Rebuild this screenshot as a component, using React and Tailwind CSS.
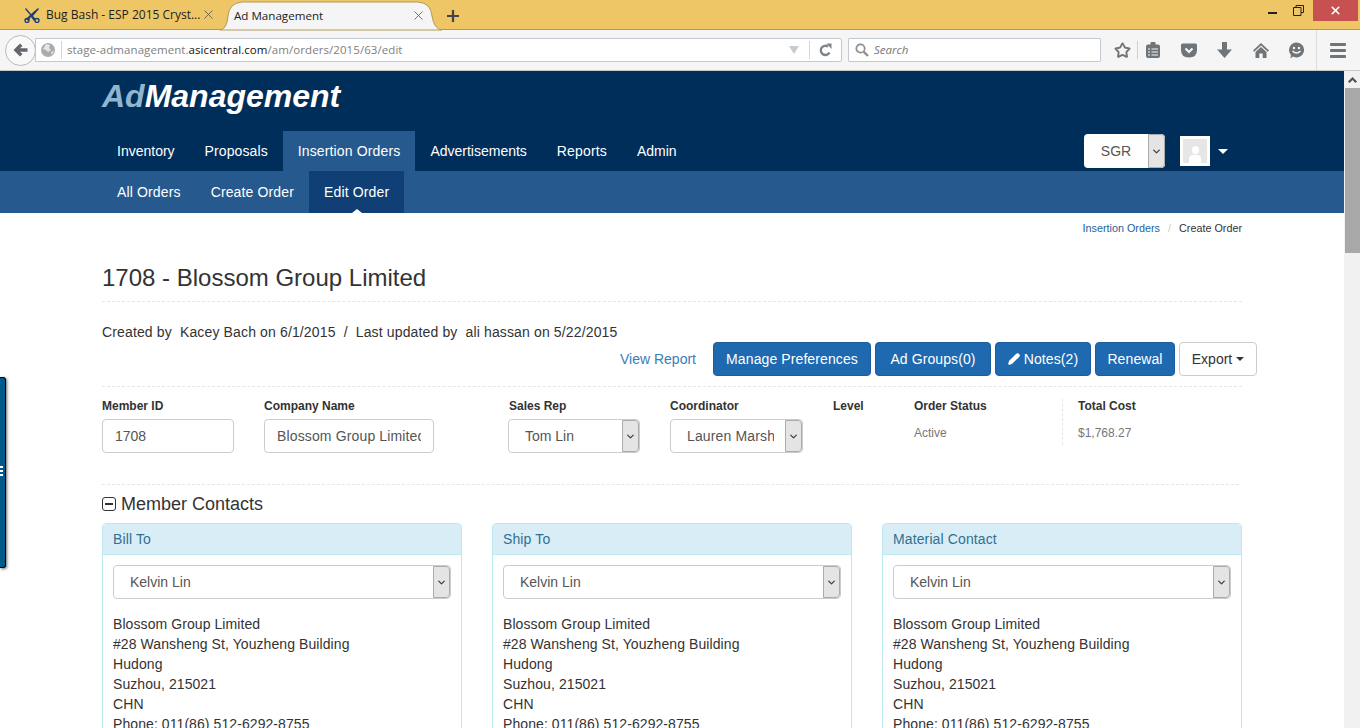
import { ChevronDown, Pencil, Star, X } from "lucide-react";

const font = "font-['Liberation_Sans',Arial,sans-serif]";

function Favicon() {
  return (
    <svg width="16" height="16" viewBox="0 0 16 16" className="shrink-0">
      <path d="M2 1 L7 7 L14 1 L15 2 L9 9 L12 12 L10 14 L7 10 L4 14 L2 12 L6 8 L1 2 Z" fill="#1d3f77" />
      <circle cx="3" cy="13.5" r="2" fill="none" stroke="#1d3f77" strokeWidth="1.4" />
      <circle cx="13" cy="13.5" r="2" fill="none" stroke="#1d3f77" strokeWidth="1.4" />
    </svg>
  );
}

function Globe() {
  return (
    <svg width="14" height="14" viewBox="0 0 14 14" className="shrink-0">
      <circle cx="7" cy="7" r="7" fill="#a9acaf" />
      <path d="M5 1 L9 2 L8 5 L10 7 L7 9 L5 7 L2 6 Z M10 9 L13 8 L11 12 Z" fill="#e4e5e6" />
    </svg>
  );
}

function BackArrow() {
  return (
    <svg width="15" height="14" viewBox="0 0 15 14">
      <path d="M7 0.5 L9.5 3 L7 5.3 H14.5 V8.7 H7 L9.5 11 L7 13.5 L0.5 7 Z" fill="#63676b" />
    </svg>
  );
}

function Reload() {
  return (
    <svg width="13" height="14" viewBox="0 0 13 14">
      <path d="M10.5 9.5 A4.6 4.6 0 1 1 9 3.6" fill="none" stroke="#7d8489" strokeWidth="2.4" />
      <path d="M7.5 0.5 H12.5 V6 Z" fill="#7d8489" />
    </svg>
  );
}

function Magnifier() {
  return (
    <svg width="14" height="14" viewBox="0 0 14 14" className="shrink-0">
      <circle cx="5.5" cy="5.5" r="4.2" fill="none" stroke="#8f8f8f" strokeWidth="1.7" />
      <path d="M8.8 8.8 L13 13" stroke="#8f8f8f" strokeWidth="2.4" />
    </svg>
  );
}

function Reader() {
  return (
    <svg width="14" height="16" viewBox="0 0 14 16">
      <rect x="0" y="2.5" width="14" height="13.5" rx="2" fill="#6f7479" />
      <rect x="4.5" y="0" width="5" height="3.5" rx="1" fill="#6f7479" />
      <path d="M2 7h2M2 10h2M2 13h2M5.5 7h6.5M5.5 10h6.5M5.5 13h6.5" stroke="#f5f5f5" strokeWidth="1.2" />
    </svg>
  );
}

function Pocket() {
  return (
    <svg width="16" height="15" viewBox="0 0 16 15">
      <path d="M1.5 0.5 H14.5 Q16 0.5 16 2 V7 Q16 14.5 8 14.5 Q0 14.5 0 7 V2 Q0 0.5 1.5 0.5 Z" fill="#6f7479" />
      <path d="M4.5 5.5 L8 9 L11.5 5.5" fill="none" stroke="#f5f5f5" strokeWidth="2.2" />
    </svg>
  );
}

function DownArrow() {
  return (
    <svg width="15" height="16" viewBox="0 0 15 16">
      <path d="M5 0 H10 V7.5 H15 L7.5 16 L0 7.5 H5 Z" fill="#6f7479" />
    </svg>
  );
}

function HomeIcon() {
  return (
    <svg width="16" height="15" viewBox="0 0 16 15">
      <path d="M8 0 L16 7.5 L14.8 8.8 L8 2.6 L1.2 8.8 L0 7.5 Z" fill="#6f7479" />
      <path d="M8 4 L13.5 9 V15 H9.7 V10.5 H6.3 V15 H2.5 V9 Z" fill="#6f7479" />
    </svg>
  );
}

function Smile() {
  return (
    <svg width="17" height="17" viewBox="0 0 17 17">
      <path d="M8.5 0.5 A7.5 7.5 0 1 1 5 14.6 L2.5 16.5 L3 13 A7.5 7.5 0 0 1 8.5 0.5 Z" fill="#6f7479" />
      <circle cx="6" cy="6" r="1.2" fill="#f5f5f5" />
      <circle cx="11" cy="6" r="1.2" fill="#f5f5f5" />
      <path d="M4.5 9 Q8.5 13 12.5 9" fill="none" stroke="#f5f5f5" strokeWidth="1.4" />
    </svg>
  );
}

function SelectArrow() {
  return (
    <div className="w-[17px] shrink-0 self-stretch flex items-center justify-center bg-[#e4e4e4] border border-[#ababab] rounded-r-[4px]">
      <ChevronDown size={11} strokeWidth={3} className="text-[#444]" />
    </div>
  );
}

function FakeSelect({ value, className = "", textClass = "" }) {
  return (
    <div className={`h-[34px] flex items-center bg-white border border-[#ccc] rounded-[4px] overflow-hidden ${className}`}>
      <span className={`flex-1 ml-[16px] text-[14px] text-[#555] whitespace-nowrap overflow-hidden ${textClass}`}>{value}</span>
      <SelectArrow />
    </div>
  );
}

function Contact({ title }) {
  return (
    <div className="w-[360px] h-[300px] border border-[#bce8f1] rounded-[4px] overflow-hidden">
      <div className="h-[31px] bg-[#d9edf7] border-b border-[#bce8f1] pl-[10px] flex items-center text-[14px] tracking-[0.12px] text-[#31708f]">{title}</div>
      <div className="pl-[10px] pr-[11px] pt-[10px] text-[14px] leading-[20px] tracking-[0.08px] text-[#333]">
        <FakeSelect value="Kelvin Lin" className="w-[338px] tracking-normal" />
        <div className="mt-[15px]">
          <div>Blossom Group Limited</div>
          <div>#28 Wansheng St, Youzheng Building</div>
          <div>Hudong</div>
          <div>Suzhou, 215021</div>
          <div>CHN</div>
          <div>Phone: 011(86) 512-6292-8755</div>
        </div>
      </div>
    </div>
  );
}

function Field({ label, className = "", children }) {
  return (
    <div className={`shrink-0 ${className}`}>
      <div className="h-[13px] mb-[7px] flex items-center text-[12px] font-bold text-[#333]">{label}</div>
      {children}
    </div>
  );
}

function BlueBtn({ children, className = "" }) {
  return (
    <div className={`h-[34px] flex items-center justify-center bg-[#1f69b0] border border-[#1a5e9f] rounded-[4px] text-[14px] tracking-[0.1px] text-white ${className}`}>
      {children}
    </div>
  );
}

export default function App() {
  const nav = [
    { label: "Inventory", className: "" },
    { label: "Proposals", className: "tracking-[0.1px]" },
    { label: "Insertion Orders", className: "bg-[#265a8f] tracking-[0.14px]" },
    { label: "Advertisements", className: "" },
    { label: "Reports", className: "tracking-[0.14px]" },
    { label: "Admin", className: "" },
  ];

  return (
    <div className={`${font} w-[1360px] h-[728px] overflow-hidden flex flex-col bg-white`}>
      {/* title bar */}
      <div className="h-[30px] shrink-0 relative flex bg-[#efc666] border-b border-[#b09a5a]">
        <div className="w-[220px] shrink-0 flex items-center pl-[24px] text-[12px] text-[#222] font-['Open_Sans',sans-serif]">
          <Favicon />
          <span className="ml-[6px] w-[146px] whitespace-nowrap">Bug Bash - ESP 2015 Cryst...</span>
          <X size={15} strokeWidth={1.3} className="ml-[9px] text-[#555]" />
        </div>
        <div className="relative w-[222px] h-[29px] mt-[1px] shrink-0 flex items-center pl-[14px] pr-[16px] text-[11.6px] text-[#222] font-['Open_Sans',sans-serif]">
          <svg width="222" height="30" viewBox="0 0 222 30" className="absolute left-0 top-0">
            <path d="M0 29 Q7 28 8 15 Q9 2 22 1 H198 Q211 2 212 15 Q214 28 222 29 Z" fill="#f5f5f5" stroke="#b09a5a" />
          </svg>
          <span className="relative flex-1">Ad Management</span>
          <X size={15} strokeWidth={1.3} className="relative text-[#555]" />
        </div>
        <svg width="12" height="12" viewBox="0 0 12 12" className="ml-[5px] mt-[10px]">
          <path d="M6 0 V12 M0 6 H12" stroke="#444" strokeWidth="2.2" />
        </svg>
        <div className="ml-auto flex items-start pr-[2px]">
          <div className="mt-[12px] w-[9px] h-[2px] bg-[#222]" />
          <svg width="11" height="11" viewBox="0 0 11 11" className="ml-[16px] mt-[5px]">
            <path d="M3 2.5 V0.5 H10.5 V7.5 H8 M0.5 2.5 H8 V10.5 H0.5 Z" fill="none" stroke="#222" />
          </svg>
          <div className="ml-[9px] w-[45px] h-[21px] bg-[#c75050] flex items-center justify-center">
            <X size={13} strokeWidth={3} className="text-white" />
          </div>
        </div>
      </div>

      {/* toolbar */}
      <div className="h-[41px] shrink-0 flex items-center bg-[#f5f5f5] border-b border-[#c8c8c8] pl-[5px] font-['Open_Sans',sans-serif]">
        <div className="relative z-10 w-[31px] h-[31px] rounded-full bg-[#f9f9f9] border border-[#b9b9b9] flex items-center justify-center">
          <BackArrow />
        </div>
        <div className="w-[807px] -ml-[1px] h-[24px] flex items-center bg-white border border-[#c2c9d0] rounded-r-[2px] pl-[5px]">
          <Globe />
          <div className="w-px h-[18px] bg-[#d5d5d5] ml-[6px]" />
          <span className="ml-[5px] flex-1 text-[11.5px] tracking-[0.07px] text-[#808080] whitespace-nowrap">
            stage-admanagement.<span className="text-[#111]">asicentral.com</span>/am/orders/2015/63/edit
          </span>
          <svg width="10" height="8" viewBox="0 0 10 8"><path d="M0 0 H10 L5 8 Z" fill="#c8ccd0" /></svg>
          <div className="w-px h-[18px] bg-[#d5d5d5] ml-[10px]" />
          <div className="mx-[9px] flex"><Reload /></div>
        </div>
        <div className="ml-[6px] w-[253px] h-[24px] flex items-center bg-white border border-[#c2c9d0] rounded-[1px] pl-[6px] text-[11.5px] italic text-[#777]">
          <Magnifier />
          <span className="ml-[5px]">Search</span>
        </div>
        <div className="flex items-center">
          <Star size={17} strokeWidth={2.6} className="ml-[13px] text-[#6f7479]" />
          <div className="w-px h-[18px] bg-[#d0d0d0] ml-[6px]" />
          <div className="ml-[8px] flex"><Reader /></div>
          <div className="ml-[21px] flex"><Pocket /></div>
          <div className="ml-[20px] flex"><DownArrow /></div>
          <div className="ml-[21px] flex"><HomeIcon /></div>
          <div className="ml-[19px] flex"><Smile /></div>
          <div className="w-px h-[40px] bg-[#dcdcdc] ml-[11px]" />
          <div className="ml-[13px] flex flex-col gap-[3px]">
            <div className="w-[16px] h-[3px] bg-[#6f7479] rounded-[1px]" />
            <div className="w-[16px] h-[3px] bg-[#6f7479] rounded-[1px]" />
            <div className="w-[16px] h-[3px] bg-[#6f7479] rounded-[1px]" />
          </div>
        </div>
      </div>

      {/* page */}
      <div className="relative flex-1 flex min-h-0">
        <div className="absolute left-0 top-[306px] w-[6px] h-[191px] bg-[#005a8c] border-r border-y border-black rounded-r-[3px] shadow-[1px_1px_3px_rgba(0,0,0,0.6)]">
          <div className="absolute left-0 top-[88px] flex flex-col gap-[2px]">
            <div className="w-[3px] h-[2px] bg-white" />
            <div className="w-[3px] h-[2px] bg-white" />
            <div className="w-[3px] h-[2px] bg-white" />
          </div>
        </div>

        <div className="w-[1344px] shrink-0 overflow-hidden">
          <header className="bg-[#002e5b]">
            <div className="w-[1140px] ml-[102px] h-[60px] pt-[6px]">
              <div className="text-[32px] leading-[38px] font-bold italic text-white">
                <span className="text-[#92b5cf]">Ad</span>Management
              </div>
            </div>
            <div className="w-[1140px] ml-[102px] h-[40px] flex items-stretch text-[14px]">
              {nav.map((item) => (
                <div key={item.label} className={`px-[15px] flex items-center text-white ${item.className}`}>
                  {item.label}
                </div>
              ))}
              <div className="ml-auto flex items-center">
                <div className="w-[81px] h-[34px] flex items-center bg-white rounded-[4px] overflow-hidden">
                  <span className="flex-1 text-center text-[14px] text-[#555]">SGR</span>
                  <SelectArrow />
                </div>
                <div className="ml-[15px] w-[30px] h-[30px] bg-white p-[3px]">
                  <div className="relative w-full h-full bg-[#e6e6e6] overflow-hidden">
                    <div className="absolute left-[9px] top-[7px] w-[7px] h-[8px] rounded-full bg-white" />
                    <div className="absolute left-[6px] top-[16px] w-[12px] h-[8px] rounded-t-[4px] bg-white" />
                  </div>
                </div>
                <div className="ml-[8px] mr-[14px] w-0 h-0 border-x-[5px] border-x-transparent border-t-[5px] border-t-white" />
              </div>
            </div>
          </header>
          <div className="h-[42px] bg-[#265a8f]">
            <div className="ml-[102px] h-full flex items-stretch text-[14px] tracking-[0.14px] text-white">
              <div className="px-[15px] flex items-center">All Orders</div>
              <div className="px-[15px] flex items-center">Create Order</div>
              <div className="relative px-[15px] flex items-center bg-[#0f3f75]">
                Edit Order
                <div className="absolute left-1/2 -translate-x-1/2 bottom-0 w-0 h-0 border-x-[5px] border-x-transparent border-b-[4px] border-b-white" />
              </div>
            </div>
          </div>

          <main className="w-[1140px] ml-[102px]">
            <div className="h-[30px] flex items-center justify-end text-[10.8px] text-[#333]">
              <span className="text-[#1f5f9c]">Insertion Orders</span>
              <span className="mx-[8px] text-[#ccc]">/</span>
              <span>Create Order</span>
            </div>
            <h1 className="mt-[20px] text-[24px] leading-[30px] text-[#333]">1708 - Blossom Group Limited</h1>
            <div className="mt-[8px] border-t border-dashed border-[#e6e6e6]" />
            <div className="mt-[22px] text-[14px] leading-[17px] tracking-[0.14px] text-[#333] whitespace-pre">Created by  Kacey Bach on 6/1/2015  /  Last updated by  ali hassan on 5/22/2015</div>

            <div className="mt-[1px] w-[1155px] flex items-center justify-end gap-[4px]">
              <span className="mr-[13px] text-[14px] text-[#3b7cba]">View Report</span>
              <BlueBtn className="w-[158px]">Manage Preferences</BlueBtn>
              <BlueBtn className="w-[116px]">Ad Groups(0)</BlueBtn>
              <BlueBtn className="w-[96px]">
                <Pencil size={12} strokeWidth={3} className="mr-[4px]" fill="currentColor" />Notes(2)
              </BlueBtn>
              <BlueBtn className="w-[80px]">Renewal</BlueBtn>
              <div className="w-[78px] h-[34px] flex items-center justify-center bg-white border border-[#ccc] rounded-[4px] text-[14px] text-[#333]">
                Export
                <div className="ml-[4px] w-0 h-0 border-x-[4px] border-x-transparent border-t-[4px] border-t-[#333]" />
              </div>
            </div>

            <div className="mt-[10px] border-t border-dashed border-[#e6e6e6]" />

            <div className="mt-[12px] flex items-start">
              <Field label="Member ID" className="w-[162px]">
                <div className="w-[132px] h-[34px] pl-[12px] flex items-center border border-[#ccc] rounded-[4px] text-[14px] text-[#555]">1708</div>
              </Field>
              <Field label="Company Name" className="w-[245px]">
                <div className="w-[170px] h-[34px] px-[12px] flex items-center border border-[#ccc] rounded-[4px] text-[14px] tracking-[0.14px] text-[#555] whitespace-nowrap overflow-hidden">
                  <span className="overflow-hidden">Blossom Group Limited</span>
                </div>
              </Field>
              <Field label="Sales Rep" className="w-[161px]">
                <FakeSelect value="Tom Lin" className="w-[132px] -ml-[1px]" />
              </Field>
              <Field label="Coordinator" className="w-[163px]">
                <FakeSelect value="Lauren Marsh" className="w-[133px] tracking-[0.14px]" textClass="mr-[11px]" />
              </Field>
              <Field label="Level" className="w-[81px]" />
              <Field label="Order Status" className="w-[148px]">
                <div className="text-[12px] leading-[14px] mt-[14px] text-[#777]">Active</div>
              </Field>
              <div className="shrink-0 h-[46px] border-l border-dashed border-[#e6e6e6] pl-[15px]">
                <div className="h-[13px] mb-[7px] flex items-center text-[12px] font-bold text-[#333]">Total Cost</div>
                <div className="text-[12px] leading-[14px] mt-[14px] text-[#777]">$1,768.27</div>
              </div>
            </div>

            <div className="mt-[31px] w-[1137px] border-t border-dashed border-[#e6e6e6]" />

            <div className="mt-[8px] h-[22px] flex items-center text-[18px] text-[#333]">
              <div className="w-[14px] h-[14px] border-[1.5px] border-[#333] rounded-[3px] flex items-center justify-center">
                <div className="w-[8px] h-[1.5px] bg-[#333]" />
              </div>
              <span className="ml-[5px]">Member Contacts</span>
            </div>

            <div className="mt-[8px] flex gap-[30px]">
              <Contact title="Bill To" />
              <Contact title="Ship To" />
              <Contact title="Material Contact" />
            </div>
          </main>
        </div>

        {/* scrollbar */}
        <div className="w-[16px] shrink-0 bg-[#f1f1f1] flex flex-col items-center">
          <div className="h-[17px] flex items-center justify-center">
            <svg width="9" height="6" viewBox="0 0 9 6">
              <path d="M0 4.5 L4.5 0 L9 4.5 L7.5 6 L4.5 3 L1.5 6 Z" fill="#505050" />
            </svg>
          </div>
          <div className="w-[15px] h-[165px] bg-[#a8a8a8]" />
        </div>
      </div>
    </div>
  );
}
